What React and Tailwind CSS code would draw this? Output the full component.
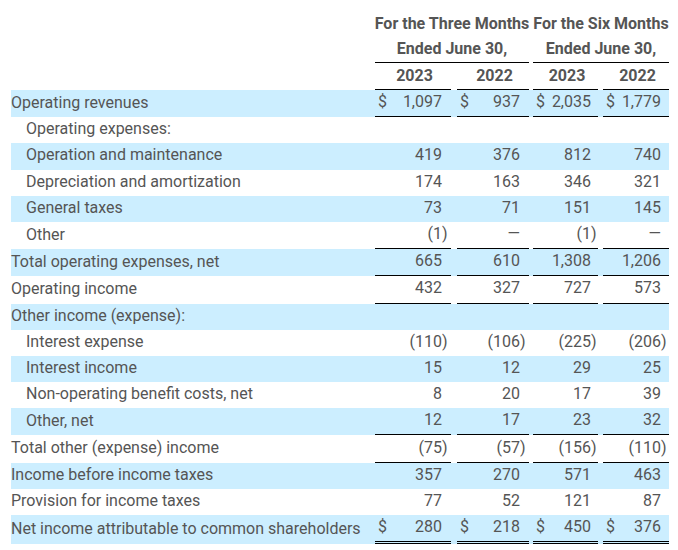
import React from "react";

const rows = [
  { label: "Operating revenues", vals: ["1,097", "937", "2,035", "1,779"], dollar: true, border: "single" },
  { label: "Operating expenses:", indent: true, vals: null },
  { label: "Operation and maintenance", indent: true, vals: ["419", "376", "812", "740"] },
  { label: "Depreciation and amortization", indent: true, vals: ["174", "163", "346", "321"] },
  { label: "General taxes", indent: true, vals: ["73", "71", "151", "145"] },
  { label: "Other", indent: true, vals: ["(1)", "—", "(1)", "—"], border: "single" },
  { label: "Total operating expenses, net", vals: ["665", "610", "1,308", "1,206"], border: "single" },
  { label: "Operating income", vals: ["432", "327", "727", "573"], border: "single" },
  { label: "Other income (expense):", vals: null },
  { label: "Interest expense", indent: true, vals: ["(110)", "(106)", "(225)", "(206)"] },
  { label: "Interest income", indent: true, vals: ["15", "12", "29", "25"] },
  { label: "Non-operating benefit costs, net", indent: true, vals: ["8", "20", "17", "39"] },
  { label: "Other, net", indent: true, vals: ["12", "17", "23", "32"], border: "single" },
  { label: "Total other (expense) income", vals: ["(75)", "(57)", "(156)", "(110)"], border: "single" },
  { label: "Income before income taxes", vals: ["357", "270", "571", "463"] },
  { label: "Provision for income taxes", vals: ["77", "52", "121", "87"] },
  { label: "Net income attributable to common shareholders", vals: ["280", "218", "450", "376"], dollar: true, border: "double" },
];

const trail = ["w-[9px]", "w-[9px]", "w-[7px]", "w-[8px]"];
const colStart = ["col-start-2", "col-start-4", "col-start-6", "col-start-8"];
const GRID = "grid grid-cols-[364px_76px_6px_72px_4px_65px_5px_66px]";

function ValueCell({ v, i, dollar, border }) {
  const neg = v.startsWith("(");
  const num = neg ? v.slice(0, -1) : v;
  const b =
    border === "single"
      ? "border-b border-black"
      : border === "double"
      ? "border-b-[3px] border-double border-black"
      : "";
  return (
    <div className={`${colStart[i]} flex items-center pl-[3px] pb-[2px] ${b}`}>
      {dollar && <span>$</span>}
      <span className="ml-auto">{num}</span>
      <span className={`${trail[i]} text-left`}>{neg ? ")" : ""}</span>
    </div>
  );
}

export default function App() {
  return (
    <div className="bg-white w-[678px] h-[550px] pt-[10px] pl-[11px] text-[16px] text-[#555555] font-[Roboto,sans-serif]">
      <div className="w-[658px]">
        {/* Header row 1 */}
        <div className={`${GRID} h-[26px] font-bold`}>
          <div className="col-start-2 col-span-3 flex items-center justify-center pt-[2px] whitespace-nowrap">
            For the Three Months
          </div>
          <div className="col-start-6 col-span-3 flex items-center justify-center pt-[2px] whitespace-nowrap">
            For the Six Months
          </div>
        </div>
        {/* Header row 2 */}
        <div className={`${GRID} h-[27px] font-bold`}>
          <div className="col-start-2 col-span-3 flex items-center justify-center border-b border-black whitespace-nowrap">
            Ended June 30,
          </div>
          <div className="col-start-6 col-span-3 flex items-center justify-center border-b border-black whitespace-nowrap">
            Ended June 30,
          </div>
        </div>
        {/* Header row 3 */}
        <div className={`${GRID} h-[27px] font-bold`}>
          {["2023", "2022", "2023", "2022"].map((y, i) => (
            <div key={i} className={`${colStart[i]} flex items-center justify-center pl-[3px] border-b border-black`}>
              {y}
            </div>
          ))}
        </div>
        {/* Body */}
        {rows.map((r, idx) => {
          const h =
            r.border === "single" ? "h-[27.2px]" : r.border === "double" ? "h-[29.2px]" : "h-[26.2px]";
          const bg = idx % 2 === 0 ? "bg-[#cceeff]" : "bg-white";
          return (
            <div key={idx} className={`${GRID} ${h} ${bg}`}>
              <div className={`col-start-1 flex items-center pb-[2px] whitespace-nowrap ${r.indent ? "pl-[15px]" : ""}`}>
                {r.label}
              </div>
              {r.vals &&
                r.vals.map((v, i) => (
                  <ValueCell key={i} v={v} i={i} dollar={r.dollar} border={r.border} />
                ))}
            </div>
          );
        })}
      </div>
    </div>
  );
}
